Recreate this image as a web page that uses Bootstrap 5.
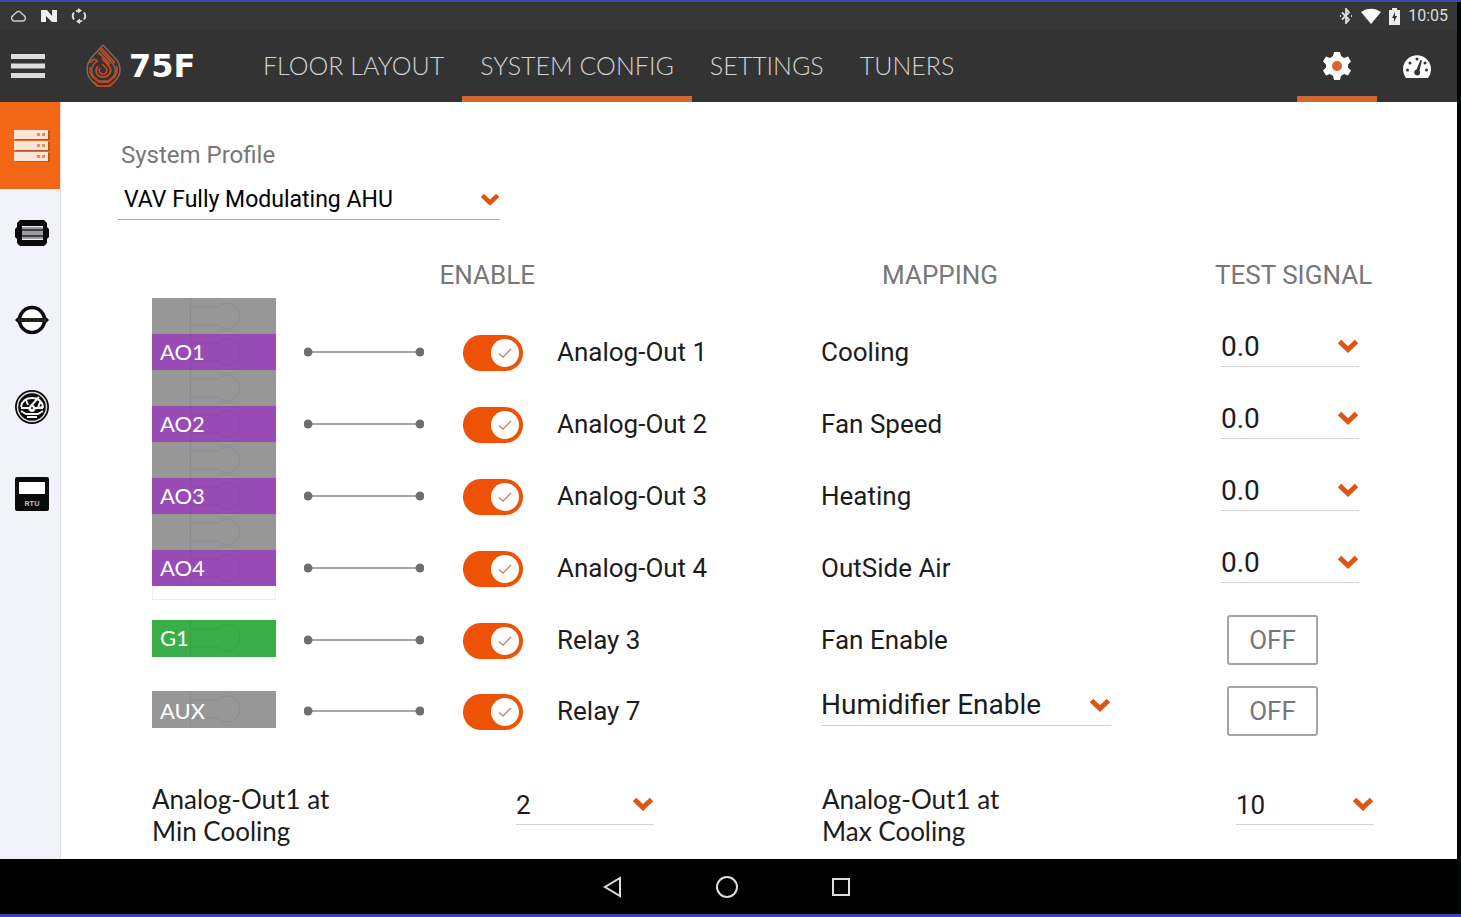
<!DOCTYPE html>
<html lang="en">
<head>
<meta charset="utf-8">
<meta name="viewport" content="width=device-width, initial-scale=1">
<title>75F System Config</title>
<link href="https://cdn.jsdelivr.net/npm/bootstrap@5.3.0/dist/css/bootstrap.min.css" rel="stylesheet">
<style>
  :root { --bar: #333; --ink: #1c1c1c; --muted: #777; --frame: #3a47ad; --active: #d2682f; }
  body { font-family: Roboto, sans-serif; color: var(--ink); background: #fff;
         border-top: 2px solid var(--frame); border-bottom: 3px solid var(--frame); }
  .device { border-right: 4px solid #050707; }
  svg { display: block; }

  /* top bars */
  .status-bar { background: #363636; color: #ddd; height: 28px; padding: 0 9px 0 10px; font-size: 16px; }
  .app-bar { background: var(--bar); height: 72px; }
  .menu-btn { padding: 0 11px; }
  .brand-link { width: 113px; margin: 0 46px 0 30px; gap: 8px; color: #fff; font: 700 32px/40px "DejaVu Sans", sans-serif; }
  .tabs a { font: 300 25px/70px Lato, sans-serif; color: #d4d4d4; padding: 0 18px; text-decoration: none; white-space: nowrap; }
  .tools a { width: 80px; }
  .tabs a.active, .tools a.active { box-shadow: inset 0 -6px var(--active); }

  /* module rail */
  .rail { width: 61px; background: #f2f2fb; border-right: 1px solid #dcdce4; }
  .rail a { height: 87px; padding-left: 4px; }
  .rail a.active { background: #f46717; }

  /* content */
  .content-pane { padding: 37px 55px 11px 91px; }
  .profile { margin-left: -34px; width: 382px; }
  .profile label { font-size: 24px; line-height: 32px; color: var(--muted); padding-left: 3px; }
  .picker { appearance: none; display: block; width: 138px; height: 40px; padding: 0 24px 0 0; margin-bottom: 10px;
            font-size: 28px; line-height: 38px; color: var(--ink); border: 0; border-bottom: 1px solid #d2d2d2; border-radius: 0;
            background: url("data:image/svg+xml,%3Csvg xmlns='http://www.w3.org/2000/svg' viewBox='0 0 22 16'%3E%3Cpath d='M2.500 3.500 11 11.500l8.500-8' fill='none' stroke='%23dd5514' stroke-width='5'/%3E%3C/svg%3E") right 11px / 22px 16px no-repeat; }
  .picker-wide { width: 100%; height: 42px; margin: 7px 0 0; padding: 2px 24px 0 6px; font-size: 23px; color: #000; border-color: #aaa; background-size: 20px 15px; background-position-y: 14px; }
  .picker-map { width: 290px; }

  .wiring { --bs-table-bg: transparent; table-layout: fixed; color: var(--ink); margin: 30px 0 0; }
  .wiring th { height: 48px; padding: 2px 0 0; font-size: 26px; font-weight: 400; line-height: 30px; color: var(--muted); vertical-align: middle; }
  .wiring td { height: 72px; padding: 0; font-size: 26px; line-height: 32px; }
  .wiring tr.first-row td { height: 90px; padding-top: 18px; }
  .wiring tr.relay td { height: 71px; }
  .wiring tr.first-row td.strip-cell { padding-top: 0; vertical-align: top; }
  .wiring td.map, .wiring td.sig { padding-left: 6px; }
  .wiring .relay td.sig { padding-left: 12px; }

  /* terminal strip */
  .strip { width: 124px; font: 400 22px/36px Lato, sans-serif; color: #fff; }
  .strip li { height: 36px; padding-left: 8px; background: #979797 url("data:image/svg+xml,%3Csvg xmlns='http://www.w3.org/2000/svg' width='124' height='36' fill='none' stroke='%23000' stroke-opacity='.07'%3E%3Cpath d='M38.500 0v36M39 9h25c4 0 4-4 11-4a13 13 0 0 1 0 26c-7 0-7-4-11-4H39'/%3E%3C/svg%3E") no-repeat; }
  .strip .ao { background-color: #984bb5; }
  .strip .gnd { background-color: #3aaf49; margin-top: 20px; }
  .strip .aux { margin-top: 34px; line-height: 40px; }
  .strip .gnd, .strip .aux { height: 37px; }
  .strip .stub { height: 14px; background: #fff; border: 1px solid #eee; border-top: 0; }

  .switch { display: block; width: 60px; height: 36px; border: 0; margin: 2px 0 0; appearance: none; border-radius: 18px; background: #ee5206 url("data:image/svg+xml,%3Csvg xmlns='http://www.w3.org/2000/svg' viewBox='0 0 60 36'%3E%3Ccircle cx='42' cy='18' r='14' fill='%23fff'/%3E%3Cpath d='M36 18.500l4 3.500 8-8' fill='none' stroke='%23c98a6c' stroke-width='1.500'/%3E%3C/svg%3E") center / 100% no-repeat; }
  .switch:not(:checked) { background-color: #999; }
  .off-btn { display: block; width: 91px; height: 50px; padding: 0; font-size: 26px; color: #777; background: #fff; border: 2px solid #a5a5a5; border-radius: 3px; }

  .ranges { display: grid; grid-template-columns: 36fr 31fr 41fr 17fr; margin-top: 37px; }
  .ranges label { font: 400 26px/32px Lato, sans-serif; }
  .ranges .picker { margin: 2px 0 0 4px; font-size: 26px; }

  .soft-keys { background: #000; height: 55px; gap: 90px; padding-right: 4px; }
</style>
</head>
<body class="d-flex flex-column min-vh-100">
<div class="device d-flex flex-column flex-grow-1">
  <header>
    <div class="status-bar d-flex align-items-center justify-content-between">
      <div class="d-flex align-items-center" style="gap:14px">
        <svg width="17" height="14" viewBox="0 0 17 14" fill="none" stroke="#ccc" stroke-width="1.500"><path d="M4 12h9a3 3 0 0 0 1-5.500L9.500 2.500h-2L3 6.500A3 3 0 0 0 4 12z"/></svg>
        <svg width="16" height="14" viewBox="0 0 16 14" fill="#eee"><path d="M0 1h6l5 6V1h5v12h-5L5 7v6H0z"/></svg>
        <svg width="16" height="16" viewBox="0 0 16 16" fill="none" stroke="#ddd" stroke-width="2"><path d="M3 11.500a6 6 0 0 1 0-7M13 4.500a6 6 0 0 1 0 7M5 3.500a5 5 0 0 1 4-1M11 12.500a5 5 0 0 1-4 1"/><path d="M7 0l4 2.500-4 3zM9 10.500l-4 3 4 2.500z" fill="#ddd" stroke="none"/></svg>
      </div>
      <div class="d-flex align-items-center" style="gap:8px">
        <svg width="14" height="16" viewBox="0 0 14 16" fill="none" stroke="#ddd" stroke-width="1.800"><path d="M3 4.500l7 7L7 15V1l3 3.500-7 7M1 8h1M12 8h1"/></svg>
        <svg width="20" height="16" viewBox="0 0 20 16" fill="#fff"><path d="M0 4C6-.5 14-.5 20 4l-10 12z"/></svg>
        <svg width="11" height="17" viewBox="0 0 11 17"><path d="M0 2h3V0h5v2h3v15H0z" fill="#eee"/><path d="M6 4L3 10h2v4l3-6H6z" fill="#333"/></svg>
        <span>10:05</span>
      </div>
    </div>
    <nav class="app-bar d-flex align-items-stretch" aria-label="Main">
      <button type="button" class="menu-btn btn border-0 rounded-0" aria-label="Menu">
        <svg width="34" height="26" viewBox="0 0 34 26" fill="#ddd"><path d="M0 1h34v5H0zM0 10.500h34v5H0zM0 20h34v5H0z"/></svg>
      </button>
      <a href="#" class="brand-link d-flex align-items-center text-decoration-none">
        <svg class="flex-shrink-0" width="35" height="44" viewBox="0 0 35 44" fill="none">
          <g stroke="#8d6257" stroke-width="1.500"><path d="M17 1L6 13C-1 21 0 31 6 37l5 5h13l5-5c6-6 7-15 1-22L17 1M14 6l13 14c3 4 3 9 0 13l-5 4h-9l-5-4c-3-4-3-9 0-13l3-3"/></g>
          <g stroke="#c8431c" stroke-width="2"><path d="M15 4l14 15M12 8l12 12M4 19c3-5 6-4 8-1M8 38l4 4h11l5-4M7 33l6 5h9l6-5M12 22c-4 5-1 11 5 11s10-6 6-11l-7-8"/></g>
          <g stroke="#d24a1f" stroke-width="1.500"><path d="M4 23v5l3 6M31 22v6l-3 6M14 24c-2 3 0 6 3 6s5-3 3-6l-4-4"/></g>
        </svg>
        <span>75F</span>
      </a>
      <div class="tabs d-flex">
        <a href="#">FLOOR LAYOUT</a>
        <a href="#" class="active" aria-current="page">SYSTEM CONFIG</a>
        <a href="#">SETTINGS</a>
        <a href="#">TUNERS</a>
      </div>
      <div class="tools d-flex ms-auto">
        <a href="#" class="active d-flex align-items-center justify-content-center" aria-label="Configuration">
          <svg width="28" height="28" viewBox="0 0 28 28"><path d="M11 0h6l1 4 3 2 4-1.500 3 5L25 12.500v3l3 3-3 5L21 22l-3 2-1 4h-6l-1-4-3-2-4 1.500-3-5 3-3v-3l-3-3 3-5L7 6l3-2z" fill="#fff"/><circle cx="14" cy="14" r="5" fill="#e0622a"/></svg>
        </a>
        <a href="#" class="d-flex align-items-center justify-content-center" aria-label="Dashboard">
          <svg width="28" height="24" viewBox="0 0 28 24"><path d="M3 24a14 14 0 1 1 22 0z" fill="#fff"/><g fill="#333"><circle cx="7" cy="9" r="1.500"/><circle cx="14" cy="5" r="1.500"/><circle cx="22" cy="9" r="1.500"/><circle cx="4.500" cy="16" r="1.500"/><circle cx="23.500" cy="16" r="1.500"/><path d="M17.500 6l1.500.5-2.500 10a3 3 0 1 1-3-1z"/></g></svg>
        </a>
      </div>
    </nav>
  </header>

  <div class="d-flex flex-grow-1">
    <nav class="rail flex-shrink-0" aria-label="Modules">
      <a href="#" class="active d-flex align-items-center justify-content-center" aria-label="System">
        <svg width="36" height="32" viewBox="0 0 36 32"><g fill="#8b4a2a" opacity=".6"><path d="M2 1h34v9H2zM2 12h34v9H2zM2 23h34v9H2z"/></g><g fill="#fde6d8"><path d="M0 0h34v9H0zM0 11h34v9H0zM0 22h34v9H0z"/></g><path d="M23 3h3v3h-3zM28 3h3v3h-3zM23 14h3v3h-3zM28 14h3v3h-3zM23 25h3v3h-3zM28 25h3v3h-3z" fill="#f08a50"/></svg>
      </a>
      <a href="#" class="d-flex align-items-center justify-content-center" aria-label="Equipment">
        <svg width="34" height="26" viewBox="0 0 34 26"><path d="M5 0h24l3 3v4l2 2v8l-2 2v4l-3 3H5l-3-3v-4l-2-2V9l2-2V3z" fill="#0a0a0a"/><path d="M7 6h21v14H7z" fill="#9a9aa0"/><path d="M7 6.500h21M7 19.500h21" stroke="#eee"/><path d="M7 10h21M7 16h21" stroke="#222" stroke-width="1.500"/></svg>
      </a>
      <a href="#" class="d-flex align-items-center justify-content-center" aria-label="Damper">
        <svg width="34" height="30" viewBox="0 0 34 30"><circle cx="17" cy="15" r="12.500" fill="#fff" stroke="#0a0a0a" stroke-width="3.500"/><path d="M0 15l5-5v10zM34 15l-5-5v10z" fill="#0a0a0a"/><path d="M3 15h28" stroke="#222" stroke-width="4"/></svg>
      </a>
      <a href="#" class="d-flex align-items-center justify-content-center" aria-label="Meter">
        <svg width="36" height="36" viewBox="0 0 36 36" fill="none"><circle cx="18" cy="18" r="17" fill="#0a0a0a"/><circle cx="18" cy="18" r="14.500" stroke="#ddd" stroke-width="1.500"/><g stroke="#f4f4f4" stroke-width="2"><path d="M7 18c1-6 5-9 11-9s10 3 11 9l-5 1 2-6M16 18l9-10M12 11l2 5M7 19h8c1 4 5 4 6 0h8M7 22l5 3h12l5-3M13 28h10"/><circle cx="18" cy="19" r="2"/></g></svg>
      </a>
      <a href="#" class="d-flex align-items-center justify-content-center" aria-label="RTU">
        <svg width="34" height="36" viewBox="0 0 34 36"><rect y="1" width="34" height="34" rx="2" fill="#0a0a0a"/><path d="M4 6h26v12H4z" fill="#fff"/><text x="17" y="30" text-anchor="middle" font-family="Roboto, sans-serif" font-size="8" font-weight="700" fill="#bbb">RTU</text></svg>
      </a>
    </nav>

    <main class="content-pane flex-grow-1">
      <div class="profile">
        <label for="profile" class="d-block">System Profile</label>
        <select id="profile" class="picker picker-wide"><option>VAV Fully Modulating AHU</option></select>
      </div>

      <table class="wiring table table-borderless align-middle">
        <colgroup><col style="width:152px"><col style="width:159px"><col style="width:94px"><col><col style="width:32%"><col style="width:187px"></colgroup>
        <thead>
          <tr>
            <th></th>
            <th colspan="2" class="text-end" style="padding-right:22px">ENABLE</th>
            <th></th>
            <th style="padding-left:67px">MAPPING</th>
            <th>TEST SIGNAL</th>
          </tr>
        </thead>
        <tbody>
          <tr class="first-row">
            <td rowspan="6" class="strip-cell">
              <ul class="strip list-unstyled mb-0">
                <li></li><li class="ao">AO1</li>
                <li></li><li class="ao">AO2</li>
                <li></li><li class="ao">AO3</li>
                <li></li><li class="ao">AO4</li>
                <li class="stub"></li>
                <li class="gnd">G1</li>
                <li class="aux">AUX</li>
              </ul>
            </td>
            <td><svg width="120" height="10"><use href="#link"/></svg></td>
            <td><input id="ao1" class="switch" type="checkbox" role="switch" checked></td>
            <td><label for="ao1">Analog-Out 1</label></td>
            <td class="map">Cooling</td>
            <td class="sig"><select class="picker" aria-label="Test signal, Analog-Out 1"><option>0.0</option></select></td>
          </tr>
          <tr>
            <td><svg width="120" height="10"><use href="#link"/></svg></td>
            <td><input id="ao2" class="switch" type="checkbox" role="switch" checked></td>
            <td><label for="ao2">Analog-Out 2</label></td>
            <td class="map">Fan Speed</td>
            <td class="sig"><select class="picker" aria-label="Test signal, Analog-Out 2"><option>0.0</option></select></td>
          </tr>
          <tr>
            <td><svg width="120" height="10"><use href="#link"/></svg></td>
            <td><input id="ao3" class="switch" type="checkbox" role="switch" checked></td>
            <td><label for="ao3">Analog-Out 3</label></td>
            <td class="map">Heating</td>
            <td class="sig"><select class="picker" aria-label="Test signal, Analog-Out 3"><option>0.0</option></select></td>
          </tr>
          <tr>
            <td><svg width="120" height="10"><use href="#link"/></svg></td>
            <td><input id="ao4" class="switch" type="checkbox" role="switch" checked></td>
            <td><label for="ao4">Analog-Out 4</label></td>
            <td class="map">OutSide Air</td>
            <td class="sig"><select class="picker" aria-label="Test signal, Analog-Out 4"><option>0.0</option></select></td>
          </tr>
          <tr class="relay">
            <td><svg width="120" height="10"><use href="#link"/></svg></td>
            <td><input id="r3" class="switch" type="checkbox" role="switch" checked></td>
            <td><label for="r3">Relay 3</label></td>
            <td class="map">Fan Enable</td>
            <td class="sig"><button type="button" class="off-btn">OFF</button></td>
          </tr>
          <tr class="relay">
            <td><svg width="120" height="10"><use href="#link"/></svg></td>
            <td><input id="r7" class="switch" type="checkbox" role="switch" checked></td>
            <td><label for="r7">Relay 7</label></td>
            <td class="map"><select class="picker picker-map" aria-label="Mapping, Relay 7"><option>Humidifier Enable</option></select></td>
            <td class="sig"><button type="button" class="off-btn">OFF</button></td>
          </tr>
        </tbody>
      </table>

      <div class="ranges">
        <label for="minCool">Analog-Out1 at<br>Min Cooling</label>
        <select id="minCool" class="picker"><option>2</option></select>
        <label for="maxCool">Analog-Out1 at<br>Max Cooling</label>
        <select id="maxCool" class="picker"><option>10</option></select>
      </div>
    </main>
  </div>

  <footer class="soft-keys d-flex align-items-center justify-content-center">
    <button type="button" class="btn p-0 border-0" aria-label="Back"><svg width="24" height="24" viewBox="0 0 24 24" fill="none" stroke="#ddd" stroke-width="2"><path d="M19 3v18L4 12z"/></svg></button>
    <button type="button" class="btn p-0 border-0" aria-label="Home"><svg width="24" height="24" viewBox="0 0 24 24" fill="none" stroke="#ddd" stroke-width="2"><circle cx="12" cy="12" r="10"/></svg></button>
    <button type="button" class="btn p-0 border-0" aria-label="Recents"><svg width="24" height="24" viewBox="0 0 24 24" fill="none" stroke="#ddd" stroke-width="2"><path d="M4 4h16v16H4z"/></svg></button>
  </footer>
</div>
<svg width="0" height="0" class="position-absolute" aria-hidden="true"><defs><g id="link"><path d="M4 5h112" stroke="#888" stroke-width="1.500"/><circle cx="4" cy="5" r="4.500" fill="#6e6e6e"/><circle cx="116" cy="5" r="4.500" fill="#6e6e6e"/></g></defs></svg>
<script src="https://cdn.jsdelivr.net/npm/bootstrap@5.3.0/dist/js/bootstrap.bundle.min.js"></script>
</body>
</html>
